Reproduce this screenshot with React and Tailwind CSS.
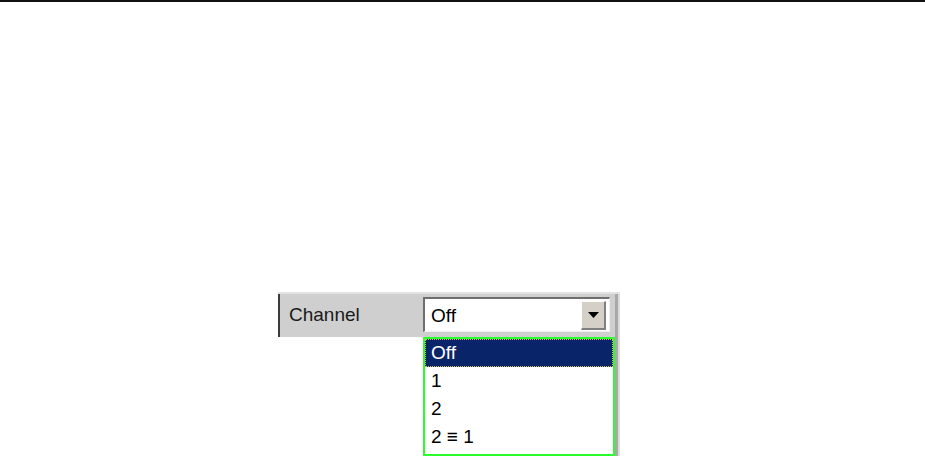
const font = { fontFamily: '"Liberation Sans", Arial, sans-serif' };

const options = ['Off', '1', '2', '2 \u2261 1'];

function ArrowButton() {
  return (
    <div className="w-[25px] h-[29px] bg-[#d4d0c8] border-t border-l border-t-white border-l-white border-b-2 border-r-2 border-b-[#808080] border-r-[#808080] flex items-center justify-center">
      <svg width="11" height="6" viewBox="0 0 11 6">
        <path d="M0 0 H11 L5.5 6 Z" fill="#000" />
      </svg>
    </div>
  );
}

function ComboBox({ value }) {
  return (
    <div className="w-[187px] h-[35px] border-t-2 border-l-2 border-t-[#6e6e6e] border-l-[#6e6e6e] border-b border-r border-b-[#f0f0f0] border-r-[#f0f0f0] bg-white flex items-center justify-between pr-[3px]">
      <span className="pl-[6px] text-[19px] text-black leading-none">{value}</span>
      <ArrowButton />
    </div>
  );
}

function DropList({ selected }) {
  return (
    <div className="absolute left-[145px] top-0 w-[192px] h-[119px] border-2 border-[#2bff2b] bg-white flex flex-col">
      {options.map((opt) => (
        <div
          key={opt}
          className={
            opt === selected
              ? 'h-[28px] flex items-center pl-[5px] bg-[#0a246a] text-white border border-dotted border-[#d8c060] text-[19px]'
              : 'h-[28px] flex items-center pl-[6px] text-black text-[19px]'
          }
        >
          {opt}
        </div>
      ))}
    </div>
  );
}

export default function App() {
  return (
    <div className="w-[925px] h-[456px] bg-white overflow-hidden flex flex-col" style={font}>
      <div className="h-[2px] bg-[#111] shrink-0" />
      <div className="pl-[278px] pt-[290px] flex-1 flex">
        <div className="flex">
          {/* main column */}
          <div className="w-[337px] flex flex-col">
            <div className="h-[2px] bg-[#e2e2e2]" />
            <div className="h-[43px] bg-[#cfcfcf] border-l-2 border-[#3c3c3c] flex items-start">
              <div className="w-[143px] h-full flex items-center pl-[9px] text-[19px] text-[#1a1a1a]">
                Channel
              </div>
              <div className="pt-[3px]">
                <ComboBox value="Off" />
              </div>
            </div>
            <div className="relative flex-1 bg-white">
              {/* next row, mostly covered by the open list */}
              <div className="absolute left-[146px] top-[117px] w-[122px] h-[10px] bg-white border-l-2 border-[#6e6e6e]" />
              <div className="absolute left-[268px] top-[117px] w-[69px] h-[10px] bg-[#cfcfcf]" />
              <DropList selected="Off" />
            </div>
          </div>
          {/* right strip */}
          <div className="w-[5px] flex flex-col">
            <div className="h-[2px] bg-[#e2e2e2]" />
            <div className="flex-1 flex">
              <div className="w-[3px] bg-[#a8a8a8]" />
              <div className="w-[2px] bg-[#dcdcdc]" />
            </div>
          </div>
        </div>
      </div>
    </div>
  );
}
